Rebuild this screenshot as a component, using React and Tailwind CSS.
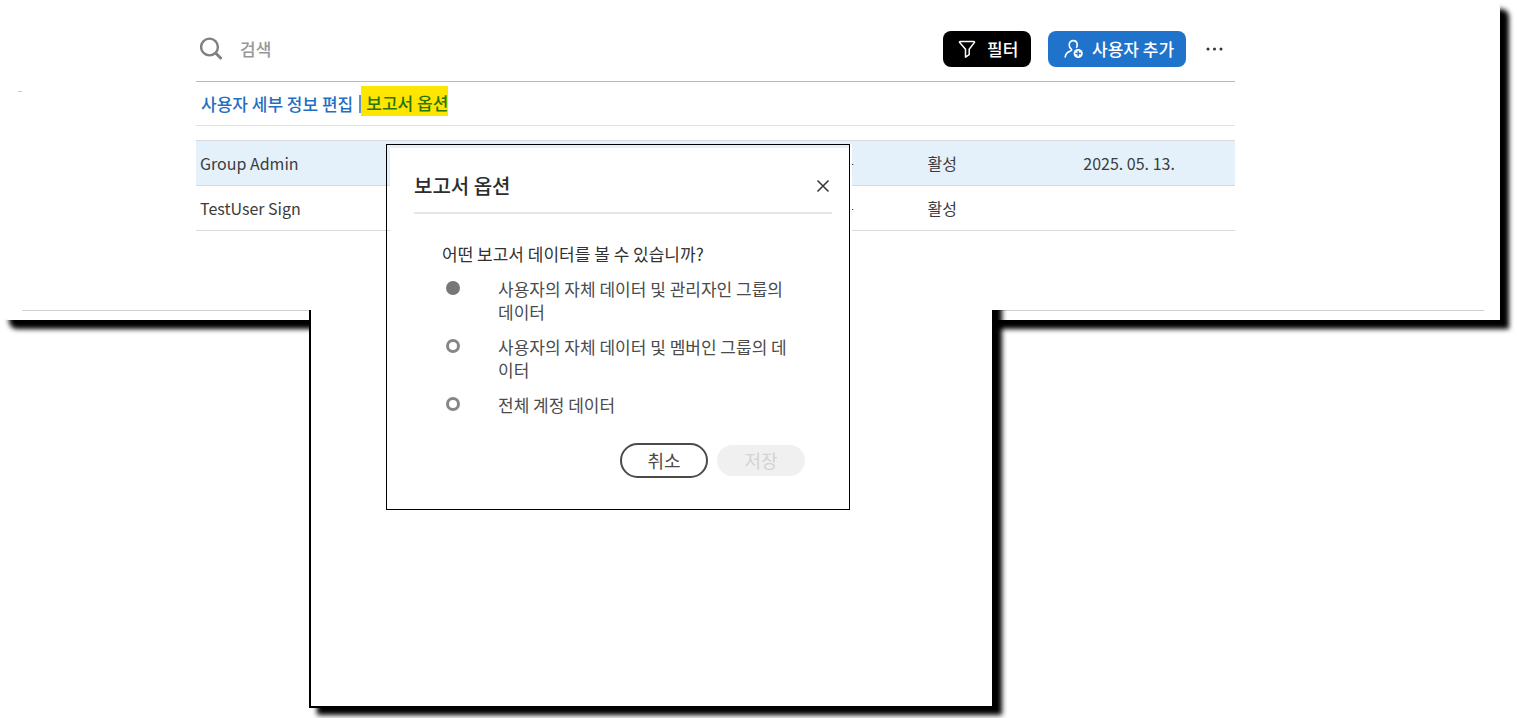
import { useState } from "react";

const users = [
  { name: "Group Admin", group: "없음", status: "활성", lastLogin: "2025. 05. 13.", selected: true },
  { name: "TestUser Sign", group: "없음", status: "활성", lastLogin: "", selected: false },
];

const reportOptions = [
  { id: "own-admin", label: "사용자의 자체 데이터 및 관리자인 그룹의 데이터" },
  { id: "own-member", label: "사용자의 자체 데이터 및 멤버인 그룹의 데이터" },
  { id: "account", label: "전체 계정 데이터" },
];

function SearchIcon() {
  return (
    <svg width="24" height="24" viewBox="0 0 24 24" fill="none" stroke="#808080" aria-hidden="true">
      <circle cx="9.5" cy="10" r="8.4" strokeWidth="2.4" />
      <path d="M15.8 16.2L20.6 21" strokeWidth="3" strokeLinecap="round" />
    </svg>
  );
}

function FilterIcon() {
  return (
    <svg width="18" height="18" viewBox="0 0 18 18" fill="none" stroke="#fff" strokeWidth="1.5" strokeLinejoin="round" aria-hidden="true">
      <path d="M2.2 1.5h13.6c.6 0 .9.6.5 1.1L11.2 9.2v5.5l-3.7 2.4V9.2L1.7 2.6c-.4-.5-.1-1.1.5-1.1z" />
    </svg>
  );
}

function AddUserIcon() {
  return (
    <svg width="20" height="20" viewBox="0 0 20 20" fill="none" aria-hidden="true">
      <path
        d="M7.6 10.4C6 9.4 5.2 7.8 5.2 6c0-2.6 1.7-4.4 4-4.4s4 1.8 4 4.4c0 .9-.2 1.7-.6 2.4M7.6 10.4c.3.9-.2 1.3-1.2 1.7C3.4 13.2 1.6 14.8 1.2 18"
        stroke="#fff"
        strokeWidth="1.6"
        strokeLinecap="round"
      />
      <circle cx="14.2" cy="14.5" r="4.6" fill="#fff" />
      <path d="M14.2 11.7v5.6M11.4 14.5h5.6" stroke="#1f73cb" strokeWidth="1.4" />
    </svg>
  );
}

function Toolbar() {
  return (
    <div className="flex items-center h-[51px] pb-[14px] border-b border-[#b8b8b8] box-content">
      <label className="flex flex-1 items-center gap-4 pl-1 pt-[14px]">
        <SearchIcon />
        <input
          type="search"
          aria-label="검색"
          placeholder="검색"
          className="flex-1 text-[17px] font-medium outline-none placeholder:text-[#979797]"
        />
      </label>
      <div className="flex items-center pt-[15px]">
        <button className="flex items-center gap-[11px] h-9 w-[88px] pl-[15px] rounded-lg bg-black text-white text-[17px] font-medium whitespace-nowrap">
          <FilterIcon />
          필터
        </button>
        <button className="flex items-center gap-2 h-9 w-[138px] ml-[17px] pl-4 rounded-lg bg-[#1f73cb] text-white text-[17px] font-medium whitespace-nowrap">
          <AddUserIcon />
          사용자 추가
        </button>
        <button aria-label="추가 옵션" className="ml-5 mr-3 h-9">
          <svg width="17" height="4" viewBox="0 0 17 4" fill="#333">
            <circle cx="2" cy="2" r="1.5" />
            <circle cx="8.5" cy="2" r="1.5" />
            <circle cx="15" cy="2" r="1.5" />
          </svg>
        </button>
      </div>
    </div>
  );
}

function UserTable() {
  return (
    <table className="w-full mt-[14px] table-fixed border-collapse text-[16px] text-[#3c3c3c]">
      <colgroup>
        <col className="w-[60.5%]" />
        <col className="w-[9.9%]" />
        <col className="w-[15%]" />
        <col />
      </colgroup>
      <tbody>
        {users.map((user) => (
          <tr
            key={user.name}
            className={
              user.selected
                ? "h-[45px] bg-[#e5f1fa] border-y border-[#d5dade]"
                : "h-[45px] border-y border-[#d9d9d9]"
            }
          >
            <td className="pl-1">{user.name}</td>
            <td>{user.group}</td>
            <td>{user.status}</td>
            <td>{user.lastLogin}</td>
          </tr>
        ))}
      </tbody>
    </table>
  );
}

function ReportDialog() {
  const [choice, setChoice] = useState("own-admin");

  return (
    <div
      role="dialog"
      aria-labelledby="report-title"
      className="absolute left-[386px] top-36 w-[464px] border border-black pl-[3px] pt-[3px] shadow-[2px_0_0_#fff]"
    >
      <div className="bg-white pl-6 pr-[17px] pb-[31px]">
        <div className="flex items-center justify-between h-[66px] pt-3 border-b-2 border-[#e6e6e6]">
          <h2 id="report-title" className="text-[20px] leading-6 font-medium text-[#2c2c2c]">
            보고서 옵션
          </h2>
          <button aria-label="닫기" className="mr-[2px]">
            <svg width="14" height="14" viewBox="0 0 14 14" stroke="#3a3a3a" strokeWidth="1.6">
              <path d="M1.5 1.5l11 11M12.5 1.5l-11 11" />
            </svg>
          </button>
        </div>

        <fieldset className="mt-7 pl-7 text-[17px] leading-[23px]">
          <legend className="text-[#323232]">어떤 보고서 데이터를 볼 수 있습니까?</legend>
          <div className="flex flex-col gap-3 pt-3 pl-1 text-[#4b4b4b]">
            {reportOptions.map((option) => (
              <label key={option.id} className="flex items-start gap-[38px]">
                <input
                  type="radio"
                  name="report"
                  checked={choice === option.id}
                  onChange={() => setChoice(option.id)}
                  className="appearance-none shrink-0 size-[14px] mt-1 rounded-full border-3 border-[#868686] checked:border-[#777777] checked:bg-[#777777]"
                />
                <span className="w-[296px]">{option.label}</span>
              </label>
            ))}
          </div>
        </fieldset>

        <div className="flex items-center justify-end gap-[9px] mt-[27px] mr-[27px] text-[18px] leading-6">
          <button className="w-[88px] h-[35px] pb-[2px] rounded-full border-2 border-[#4b4b4b] text-[#4b4b4b]">
            취소
          </button>
          <button disabled className="w-[88px] h-[31px] pb-[2px] rounded-full bg-[#f0f0f0] text-[#d3d3d3]">
            저장
          </button>
        </div>
      </div>
    </div>
  );
}

export default function App() {
  return (
    <div className="relative pb-[10px] bg-white font-['Noto_Sans_CJK_KR',sans-serif]">
      {/* Users page */}
      <main className="relative flex flex-col justify-between min-h-80 mr-[17px] bg-white rounded-tr-lg rounded-bl-lg shadow-[9px_9px_5px_#000]">
        <span className="absolute left-[18px] top-[91px] w-1 h-px bg-[#c8c8c8]" />
        <div className="pl-[196px] pr-[265px] pt-4">
          <Toolbar />
          <div className="flex items-center h-11 pl-[5px] text-[17px] font-medium border-b border-[#e1e1e1] whitespace-nowrap">
            <a href="#details" className="text-[#1f6fc4]">
              사용자 세부 정보 편집
            </a>
            <span className="w-[2px] h-[18px] ml-[6px] bg-[#5c95d0]" />
            <a href="#report" className="h-[30px] leading-[34px] mb-[6px] pl-[5px] bg-[#ffe600] text-[#28760a]">
              보고서 옵션
            </a>
          </div>
          <UserTable />
        </div>
        <hr className="ml-[22px] mr-4 mb-[9px] border-[#d0d0d0]" />
      </main>

      {/* Lower part of the page behind the dialog, its top edge is cut off flat */}
      <section className="relative min-h-[418px] w-[685px] -mt-[30px] ml-[309px] bg-white border-2 border-black shadow-[8px_7px_5px_#000] [clip-path:inset(20px_-20px_-20px_0)]" />

      <ReportDialog />
    </div>
  );
}
